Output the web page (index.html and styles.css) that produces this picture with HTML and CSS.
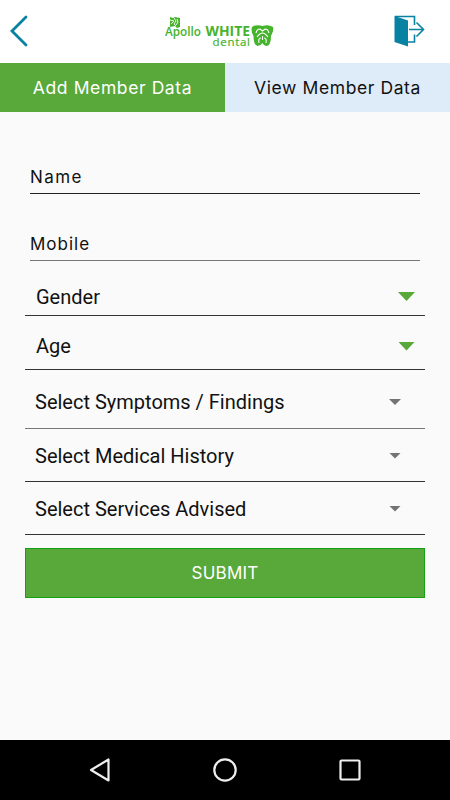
FILE: index.html
```html
<!DOCTYPE html>
<html lang="en">
<head>
  <meta charset="UTF-8">
  <meta name="viewport" content="width=device-width, initial-scale=1.0">
  <title>Apollo White Dental</title>
  <link rel="stylesheet" href="styles.css">
</head>
<body>
  <div class="screen">
    <header class="header">
      <button class="icon-btn" aria-label="Back">
        <svg width="20" height="34" viewBox="0 0 20 34">
          <path d="M18 3 L4 17 L18 31" fill="none" stroke="#0782a2" stroke-width="2.8" stroke-linecap="round"/>
        </svg>
      </button>

      <svg class="logo" width="110" height="34" viewBox="0 0 110 34">
        <!-- emblem -->
        <path d="M5 2l3 1 2-1 5 1v9l-3 1-2-2-5 1z" fill="#46b32c"/>
        <path d="M5 5l4 1-3 3M9 3l2 3-2 3 2 2M12 4l1 3-2 3" fill="none" stroke="#fff" stroke-width="0.9"/>
        <text class="logo-apollo" x="0" y="20.500" textLength="36" lengthAdjust="spacingAndGlyphs">Apollo</text>
        <text class="logo-white" x="40.500" y="20.500" textLength="44.500" lengthAdjust="spacingAndGlyphs">WHITE</text>
        <text class="logo-dental" x="47.500" y="31" textLength="37.500">dental</text>
        <!-- tooth -->
        <path d="M87 12q4-3 10.500-1q6-2 10.500 1q1 4-2 9q0 9-4 10q-3 0-4.500-3q-2 3-5 3q-4-1-4-10q-3-5-1.500-9z" fill="#46b32c"/>
        <path d="M91 18q1-4 4-4l2.500 2 2.500-2q3 0 4 4M92 22q3-4 5.500-4t5.500 4M94 28q-1-5 2-5M101 28q1-5-2-5M97.500 21v4" fill="none" stroke="#fff" stroke-width="1.100"/>
      </svg>

      <button class="icon-btn" aria-label="Log out">
        <svg width="32" height="34" viewBox="0 0 32 34" fill="none" stroke="#0782a2" stroke-width="1.600">
          <path d="M1 2.500h19.500v8.500M20.500 20.500v7.500H14M15 15.500h14.500M22.500 8.500l7 7-7 7"/>
          <path d="M.500 2l13.500 4.500v26L.500 28z" fill="#0782a2" stroke="none"/>
        </svg>
      </button>
    </header>

    <nav class="tabs">
      <a class="tab active">Add Member Data</a>
      <a class="tab">View Member Data</a>
    </nav>

    <main class="form">
      <div class="field name">Name</div>
      <div class="field mobile">Mobile</div>

      <div class="select gender"><span>Gender</span><i class="arrow"></i></div>
      <div class="select age"><span>Age</span><i class="arrow"></i></div>
      <div class="select multi symptoms"><span>Select Symptoms / Findings</span><i class="arrow"></i></div>
      <div class="select multi"><span>Select Medical History</span><i class="arrow"></i></div>
      <div class="select multi"><span>Select Services Advised</span><i class="arrow"></i></div>

      <button class="submit">SUBMIT</button>
    </main>

    <footer class="navbar">
      <svg width="24" height="26" viewBox="0 0 24 26"><path d="M20.500 2.500v21L3 13z"/></svg>
      <svg width="26" height="26" viewBox="0 0 26 26"><circle cx="13" cy="13" r="10.700"/></svg>
      <svg width="24" height="26" viewBox="0 0 24 26"><rect x="2.500" y="3.500" width="19" height="19" rx="1"/></svg>
    </footer>
  </div>
</body>
</html>
```

FILE: styles.css
```css
:root {
  --green: #59a83a;
  --background: #fafafa;
}

* {
  margin: 0;
  padding: 0;
  box-sizing: border-box;
}

body {
  background: var(--background);
  color: #111;
  font-family: Inter, sans-serif;
}

.screen {
  width: 450px;
  height: 800px;
  display: flex;
  flex-direction: column;
  overflow: hidden;
}

.header {
  height: 63px;
  padding: 14px 24px 0 8px;
  display: flex;
  justify-content: space-between;
  align-items: flex-start;
  background: #fff;
}

.icon-btn {
  background: none;
  border: none;
}

.icon-btn svg,
.logo {
  display: block;
}

.logo {
  margin-left: 18px;
  margin-top: 1px;
  fill: #46b32c;
}

.logo-apollo {
  font: 600 13px "Open Sans", sans-serif;
}

.logo-white {
  font: 700 13.5px "Open Sans", sans-serif;
}

.logo-dental {
  font: 400 11.5px "Open Sans", sans-serif;
  stroke: #46b32c;
  stroke-width: 0.2;
}

.tabs {
  display: grid;
  grid-template-columns: 1fr 1fr;
  height: 49px;
}

.tab {
  display: flex;
  align-items: center;
  justify-content: center;
  background: #deebf9;
  font-size: 17.5px;
  letter-spacing: 0.6px;
  color: #111;
}

.tab.active {
  background: var(--green);
  color: #fff;
}

.form {
  flex: 1;
  padding: 0 25px;
}

.field {
  margin: 0 5px;
  border-bottom: 1px solid #222;
  display: flex;
  align-items: flex-end;
  font-size: 17px;
  line-height: 20px;
  letter-spacing: 1px;
}

.name {
  height: 82px;
  padding-bottom: 6px;
  letter-spacing: 1.4px;
}

.mobile {
  height: 67px;
  padding-bottom: 6px;
  border-color: #777;
}

.select {
  display: flex;
  justify-content: space-between;
  align-items: center;
  border-bottom: 1px solid #333;
  font: 20px/24px Roboto, sans-serif;
}

.gender {
  height: 55px;
  padding: 17px 10px 0 11px;
}

.age {
  height: 54px;
  padding: 7px 10px 0 11px;
}

.multi {
  height: 53px;
  padding: 1px 24px 0 10px;
}

.symptoms {
  height: 59px;
  padding-top: 6px;
  border-color: #777;
}

.arrow {
  width: 17px;
  height: 9px;
  background: var(--green);
  clip-path: polygon(0 0, 100% 0, 50% 100%);
}

.multi .arrow {
  width: 12px;
  height: 6px;
  background: #737373;
}

.submit {
  width: 100%;
  height: 50px;
  margin-top: 13px;
  background: var(--green);
  border: 1px solid #16a016;
  color: #fff;
  font: 17px Inter, sans-serif;
  letter-spacing: 0.2px;
}

.navbar {
  height: 60px;
  padding: 0 88px;
  display: flex;
  justify-content: space-between;
  align-items: center;
  background: #000;
}

.navbar svg {
  fill: none;
  stroke: #eee;
  stroke-width: 2.2;
  stroke-linejoin: round;
}
```
